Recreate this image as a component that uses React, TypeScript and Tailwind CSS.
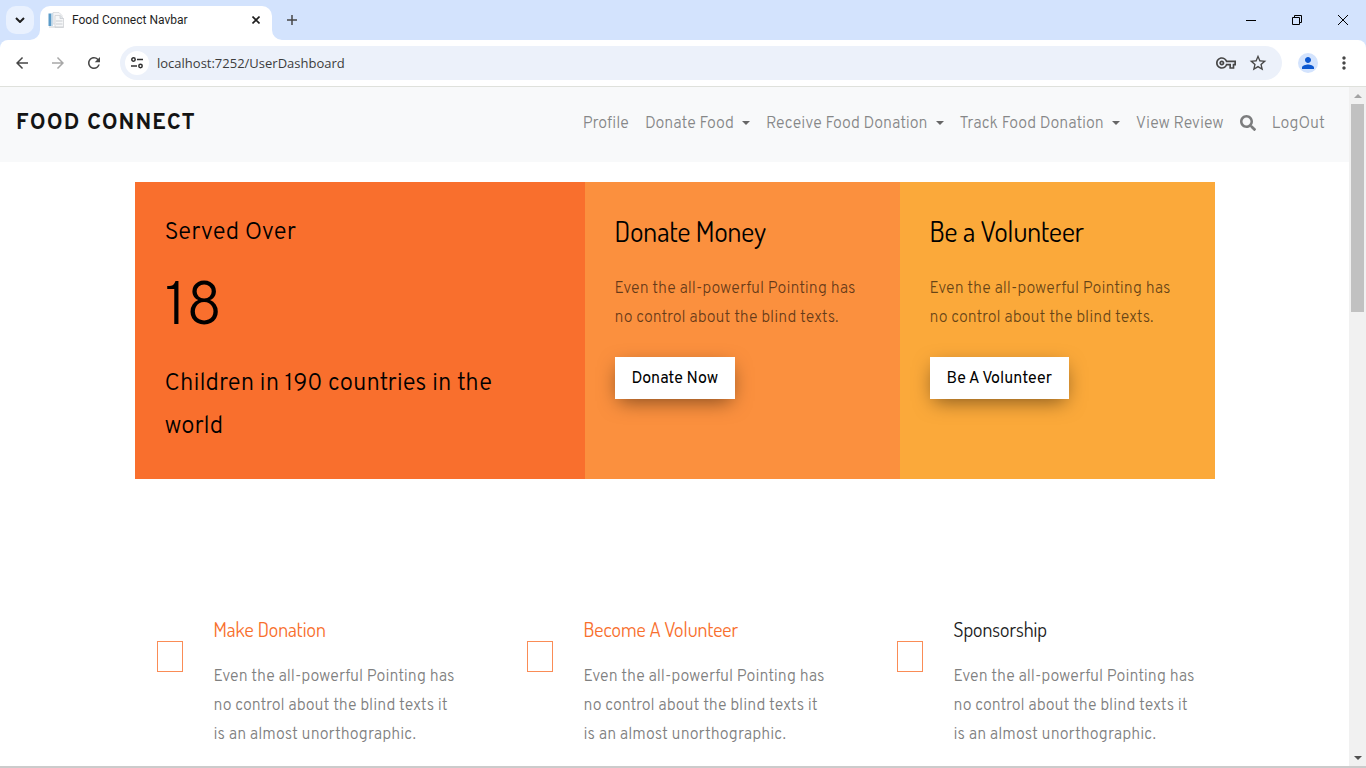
import React from "react";
import { FaSearch } from "react-icons/fa";
import {
  MdArrowBack,
  MdArrowForward,
  MdMoreVert,
  MdOutlineVpnKey,
  MdPerson,
  MdRefresh,
  MdStarBorder,
} from "react-icons/md";

const blurb = "Even the all-powerful Pointing has no control about the blind texts";

function Favicon() {
  return (
    <svg width="16" height="16" viewBox="0 0 16 16" aria-hidden="true">
      <path d="M5 .5h6l3 3V12H5z" fill="#f3f4f6" stroke="#d5d8dc" strokeWidth=".8" />
      <path d="M7 3.500h5l3.500 3V15.500H7z" fill="#f6f7f8" stroke="#cfd2d6" strokeWidth=".8" />
      <path d="M12 3.500v3h3.500" fill="#e2e5e9" stroke="#c9cdd2" strokeWidth=".8" />
      <path d="M.5 1.500h3V14h-3z" fill="#5b9bc8" />
      <path d="M3.500 1H5v13H3.500z" fill="#c9dcea" />
      <path d="M8 9h6.500M8 12h6.500" stroke="#c9cdd2" />
      <path d="M1 15h14.500" stroke="#cccfd3" />
    </svg>
  );
}

function TabStrip() {
  return (
    <div className="flex h-10 shrink-0 items-start bg-[#d3e3fd]">
      <button aria-label="Search tabs" className="mt-1.5 ml-1.5 grid size-7 place-items-center rounded-[10px] bg-[#e9f1fe]">
        <svg width="10" height="6" viewBox="0 0 10 6" fill="none" stroke="#1f1f1f" strokeWidth="2" aria-hidden="true">
          <path d="M1 1l4 4 4-4" />
        </svg>
      </button>
      <div className="relative mt-1.5 ml-1.5 flex h-[34px] w-[232px] items-center rounded-t-[10px] bg-white pr-2 pb-1.5 pl-2">
        <svg className="absolute bottom-0 -left-2.5" width="10" height="10" aria-hidden="true">
          <path d="M10 0v10H0A10 10 0 0 0 10 0z" fill="#fff" />
        </svg>
        <svg className="absolute -right-2.5 bottom-0" width="10" height="10" aria-hidden="true">
          <path d="M0 0v10h10A10 10 0 0 1 0 0z" fill="#fff" />
        </svg>
        <Favicon />
        <span className="ml-2 flex-1 font-['Roboto','Open_Sans',sans-serif] text-xs text-[#1f1f1f]">Food Connect Navbar</span>
        <button aria-label="Close tab" className="grid size-4 place-items-center">
          <svg width="8" height="8" viewBox="0 0 8 8" stroke="#1f1f1f" strokeWidth="1.600" aria-hidden="true">
            <path d="M.5.500l7 7M7.500.500l-7 7" />
          </svg>
        </button>
      </div>
      <button aria-label="New tab" className="mt-1.5 ml-1.5 grid size-7 place-items-center">
        <svg width="10" height="10" viewBox="0 0 10 10" stroke="#474747" strokeWidth="1.500" aria-hidden="true">
          <path d="M5 0v10M0 5h10" />
        </svg>
      </button>
      <div className="ml-auto flex h-10">
        <button aria-label="Minimize" className="grid w-[46px] place-items-center">
          <svg width="10" height="10" stroke="#000" aria-hidden="true">
            <path d="M0 5.500h10" />
          </svg>
        </button>
        <button aria-label="Restore" className="grid w-[46px] place-items-center">
          <svg width="10" height="10" fill="none" stroke="#000" aria-hidden="true">
            <path d="M.5 2.500h7v7h-7zM2.500 2.500v-2h7v7h-2" />
          </svg>
        </button>
        <button aria-label="Close" className="grid w-[46px] place-items-center">
          <svg width="10" height="10" stroke="#000" aria-hidden="true">
            <path d="M0 0l10 10M10 0L0 10" />
          </svg>
        </button>
      </div>
    </div>
  );
}

function Toolbar() {
  return (
    <div className="shrink-0 bg-[#d3e3fd]">
      <div className="flex h-[47px] items-center rounded-t-lg border-b border-[#dfe1dc] bg-white pr-3 pl-1 text-[#474747]">
        <button aria-label="Back" className="grid size-9 place-items-center"><MdArrowBack size={18} /></button>
        <button aria-label="Forward" className="grid size-9 place-items-center text-[#a8a8a8]"><MdArrowForward size={18} /></button>
        <button aria-label="Reload" className="grid size-9 place-items-center"><MdRefresh size={18} /></button>
        <div className="ml-2 flex h-[34px] min-w-0 flex-1 items-center rounded-full bg-[#ecf1fa] pr-3.5 pl-[5px]">
          <button aria-label="View site information" className="grid size-6 shrink-0 place-items-center rounded-full bg-white">
            <svg width="12" height="12" viewBox="0 0 12 12" fill="none" stroke="#303030" strokeWidth="1.500" aria-hidden="true">
              <circle cx="2.500" cy="2.500" r="1.700" />
              <circle cx="9.500" cy="9" r="1.700" />
              <path d="M6 2.500h6M0 9h6" />
            </svg>
          </button>
          <input
            aria-label="Address"
            defaultValue="localhost:7252/UserDashboard"
            className="ml-2 min-w-0 flex-1 bg-transparent pt-0.5 font-['Open_Sans','Noto_Sans',sans-serif] text-[13px] text-[#3c3c3c] outline-none"
          />
          <button aria-label="Manage passwords" className="mr-3"><MdOutlineVpnKey size={20} /></button>
          <button aria-label="Bookmark this tab"><MdStarBorder size={20} /></button>
        </div>
        <button aria-label="Account" className="ml-4 grid size-5 place-items-center rounded-full bg-[#d3e3fd] text-[#0b57d0]">
          <MdPerson size={18} />
        </button>
        <button aria-label="Menu" className="ml-4"><MdMoreVert size={20} /></button>
      </div>
    </div>
  );
}

function NavLink({ label, menu = false }: { label: string; menu?: boolean }) {
  return (
    <a href="#" className="flex items-center px-2">
      {label}
      {menu && <span className="mb-1 ml-2 border-x-[4px] border-t-[4px] border-x-transparent border-t-[#666666]" />}
    </a>
  );
}

function SiteNav() {
  return (
    <nav className="flex h-[75px] items-center justify-between bg-[#f8f9fa] px-4 text-[#868788]">
      <a href="#" className="pb-0.5 text-[22px] font-bold tracking-wider text-[#141414]">FOOD CONNECT</a>
      <div className="flex items-center">
        <NavLink label="Profile" />
        <NavLink label="Donate Food" menu />
        <NavLink label="Receive Food Donation" menu />
        <NavLink label="Track Food Donation" menu />
        <NavLink label="View Review" />
        <a href="#" aria-label="Search" className="px-2 pb-1 text-[#7c7d7e]"><FaSearch size={16} /></a>
        <NavLink label="LogOut" />
      </div>
    </nav>
  );
}

function ActionCard({ title, action, color }: { title: string; action: string; color: string }) {
  return (
    <div className={"p-[30px] " + color}>
      <h3 className="mb-[25px] font-['Dosis','Roboto_Condensed',sans-serif] text-[28px] leading-[38px] font-normal">{title}</h3>
      <p className="mb-6 text-black/60">{`${blurb}.`}</p>
      <button className="h-[42px] bg-white px-[17px] pt-0.5 font-normal shadow-[0_6px_20px_-4px_rgba(0,0,0,0.5)]">{action}</button>
    </div>
  );
}

function Hero() {
  return (
    <section className="mx-[30px] grid grid-cols-[10fr_7fr_7fr] text-black">
      <div className="bg-[#f96f2d] py-[30px] pr-12 pl-[30px] text-2xl leading-[43px]">
        <p>Served Over</p>
        <p className="text-[60px] leading-[108px]">18</p>
        <p>Children in 190 countries in the world</p>
      </div>
      <ActionCard title="Donate Money" action="Donate Now" color="bg-[#fb903e]" />
      <ActionCard title="Be a Volunteer" action="Be A Volunteer" color="bg-[#fba93a]" />
    </section>
  );
}

function Feature({ title, color }: { title: string; color: string }) {
  return (
    <div className="flex px-[15px]">
      <div className="flex w-[79px] shrink-0 pt-[26px] pl-[22px]">
        <span className="h-[31px] w-[26px] border border-[#fa8c56]" />
      </div>
      <div className="pr-3">
        <h3 className={"mb-5 font-['Dosis','Roboto_Condensed',sans-serif] text-xl leading-7 font-normal " + color}>{title}</h3>
        <p className="text-[#808080]">{`${blurb} it is an almost unorthographic.`}</p>
      </div>
    </div>
  );
}

function ScrollBar() {
  return (
    <div aria-hidden="true" className="flex w-[17px] shrink-0 flex-col items-center bg-[#f1f1f1]">
      <div className="grid h-[17px] place-items-center">
        <span className="border-x-4 border-b-4 border-x-transparent border-b-[#a3a3a3]" />
      </div>
      <div className="h-[208px] w-[13px] bg-[#c1c1c1]" />
      <div className="mt-auto grid h-[17px] place-items-center">
        <span className="border-x-4 border-t-4 border-x-transparent border-t-[#505050]" />
      </div>
    </div>
  );
}

export default function App() {
  return (
    <div className="flex h-screen flex-col overflow-hidden bg-white">
      <TabStrip />
      <Toolbar />
      <div className="flex min-h-0 flex-1">
        <main className="min-w-0 flex-1 overflow-hidden font-['Overpass','Roboto',sans-serif] text-base leading-[29px] font-light">
          <SiteNav />
          <div className="mx-auto max-w-[1140px] pt-5">
            <Hero />
            <section className="mt-[136px] grid grid-cols-3 px-[15px]">
              <Feature title="Make Donation" color="text-[#f86f2d]" />
              <Feature title="Become A Volunteer" color="text-[#f86f2d]" />
              <Feature title="Sponsorship" color="text-[#212121]" />
            </section>
          </div>
        </main>
        <ScrollBar />
      </div>
      <div className="h-0.5 shrink-0 bg-[#cbcbcb]" />
    </div>
  );
}
